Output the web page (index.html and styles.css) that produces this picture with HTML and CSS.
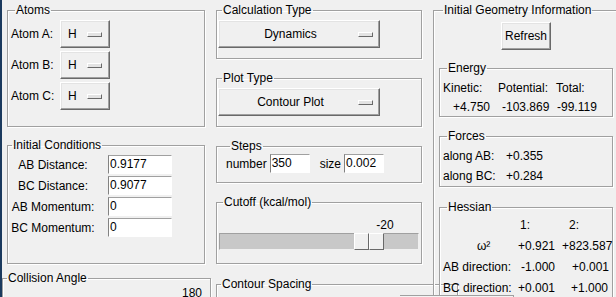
FILE: index.html
```html
<!DOCTYPE html>
<html>
<head>
<meta charset="utf-8">
<link rel="stylesheet" href="styles.css">
</head>
<body>
<div class="win">
  <div class="edge"></div>

  <div class="col col1">
    <fieldset class="grp atoms">
      <legend>Atoms</legend>
      <div class="arow"><span class="albl">Atom A:</span><div class="mbtn abtn"><span class="mtxt">H</span><i class="ind"></i></div></div>
      <div class="arow"><span class="albl">Atom B:</span><div class="mbtn abtn"><span class="mtxt">H</span><i class="ind"></i></div></div>
      <div class="arow"><span class="albl">Atom C:</span><div class="mbtn abtn"><span class="mtxt">H</span><i class="ind"></i></div></div>
    </fieldset>

    <fieldset class="grp init">
      <legend>Initial Conditions</legend>
      <div class="igrid">
        <span class="ilbl">AB Distance:</span><span class="entry">0.9177</span>
        <span class="ilbl">BC Distance:</span><span class="entry">0.9077</span>
        <span class="ilbl">AB Momentum:</span><span class="entry">0</span>
        <span class="ilbl">BC Momentum:</span><span class="entry">0</span>
      </div>
    </fieldset>

    <fieldset class="grp coll">
      <legend>Collision Angle</legend>
      <div class="cval">180</div>
      <div class="trough ctrough"></div>
    </fieldset>
  </div>

  <div class="col col2">
    <fieldset class="grp calc">
      <legend>Calculation Type</legend>
      <div class="mbtn wbtn"><span class="mtxt">Dynamics</span><i class="ind"></i></div>
    </fieldset>

    <fieldset class="grp plot">
      <legend>Plot Type</legend>
      <div class="mbtn wbtn"><span class="mtxt">Contour Plot</span><i class="ind"></i></div>
    </fieldset>

    <fieldset class="grp steps">
      <legend>Steps</legend>
      <div class="srow">
        <span class="slbl">number</span><span class="entry sent">350</span>
        <span class="slbl size">size</span><span class="entry sent">0.002</span>
      </div>
    </fieldset>

    <fieldset class="grp cutoff">
      <legend>Cutoff (kcal/mol)</legend>
      <div class="scale">
        <div class="sval" style="left: 75%">-20</div>
        <div class="trough">
          <div class="thumb" style="left: 75%"><i></i><i></i></div>
        </div>
      </div>
    </fieldset>

    <fieldset class="grp contour">
      <legend>Contour Spacing</legend>
      <div class="cspace"></div>
    </fieldset>
  </div>

  <div class="col col3">
    <fieldset class="grp geo">
      <legend>Initial Geometry Information</legend>
      <div class="inner">
        <div class="pbtn">Refresh</div>

        <fieldset class="grp sub energy">
          <legend>Energy</legend>
          <div class="egrid">
            <span class="h1">Kinetic:</span><span class="h2">Potential:</span><span class="h3">Total:</span>
            <span class="v1">+4.750</span><span class="v2">-103.869</span><span class="v3">-99.119</span>
          </div>
        </fieldset>

        <fieldset class="grp sub forces">
          <legend>Forces</legend>
          <div class="fgrid">
            <span>along AB:</span><span>+0.355</span>
            <span>along BC:</span><span>+0.284</span>
          </div>
        </fieldset>

        <fieldset class="grp sub hess">
          <legend>Hessian</legend>
          <div class="hgrid">
            <span></span><span class="p3">1:</span><span class="p8">2:</span>
            <span class="omega">ω²</span><span class="p1">+0.921</span><span class="p1">+823.587</span>
            <span>AB direction:</span><span class="p4">-1.000</span><span class="p11">+0.001</span>
            <span>BC direction:</span><span class="p1">+0.001</span><span class="p10">+1.000</span>
          </div>
        </fieldset>
      </div>
    </fieldset>
  </div>
</div>
<div class="popup"></div>
</body>
</html>
```

FILE: styles.css
```css
html, body {
  margin: 0;
  padding: 0;
}
body {
  width: 616px;
  height: 297px;
  overflow: hidden;
  position: relative;
  background: #f0f0f0;
  color: #000;
  font-family: "Liberation Sans", Arial, sans-serif;
  font-size: 12px;
  line-height: 14px;
}
.win {
  display: flex;
  align-items: flex-start;
  height: 297px;
}
.edge {
  flex: none;
  width: 2px;
  align-self: stretch;
  background: #1b3a5e;
}
.col {
  flex: none;
  display: flex;
  flex-direction: column;
  padding-top: 3px;
}
.col1 { margin-left: 5px; width: 198px; }
.col2 { margin-left: 11px; width: 206px; }
.col3 { margin-left: 11px; width: 190px; }

fieldset.grp {
  margin: 0;
  padding: 0;
  min-width: 0;
  border: 1px solid #a0a0a0;
  box-shadow: 1px 1px 0 #fff, inset 1px 1px 0 #fff;
}
legend {
  padding: 0 1px;
  margin-left: 4px;
  height: 14px;
  line-height: 14px;
}

/* menu buttons */
.mbtn {
  box-sizing: border-box;
  height: 28px;
  display: flex;
  align-items: center;
  background: #f0f0f0;
  border: 1px solid;
  border-color: #fff #696969 #696969 #fff;
  box-shadow: inset -1px -1px 0 #a0a0a0, inset 1px 1px 0 #e3e3e3;
}
.ind {
  flex: none;
  box-sizing: border-box;
  width: 15px;
  height: 5px;
  background: #e3e3e3;
  border: 1px solid;
  border-color: #fff #696969 #696969 #fff;
}
.abtn { width: 50px; padding: 0 7px 0 7px; }
.abtn .mtxt { flex: 1; }
.wbtn { width: 162px; padding-right: 6px; }
.wbtn .mtxt { flex: 1; text-align: center; padding-left: 4px; }

/* atoms */
.atoms {
  padding: 3px 0 16px 3px !important;
  display: flex;
  flex-direction: column;
  gap: 3px;
}
.arow {
  display: flex;
  align-items: center;
  height: 28px;
}
.albl { width: 49px; flex: none; }

/* entries */
.entry {
  box-sizing: border-box;
  display: block;
  height: 19px;
  line-height: 17px;
  background: #fff;
  border: 1px solid;
  border-color: #a0a0a0 #fff #fff #828282;
  padding-left: 1px;
}

/* initial conditions */
.init {
  margin-top: 11px !important;
  padding: 3px 0 26px 0 !important;
}
.igrid {
  display: grid;
  grid-template-columns: 100px 64px;
  grid-auto-rows: 19px;
  row-gap: 2px;
  align-items: center;
}
.ilbl {
  text-align: center;
  padding-right: 10px;
}

/* collision */
.coll {
  margin: 7px 0 0 -5px !important;
  width: 207px;
  padding: 1px 0 20px 0 !important;
}
.cval {
  text-align: right;
  padding-right: 8px;
  height: 14px;
}
.ctrough {
  margin: 0 8px 0 9px;
}

/* calc / plot */
.calc {
  padding: 3px 0 10px 1px !important;
}
.plot {
  margin-top: 12px !important;
  padding: 3px 0 10px 1px !important;
}

/* steps */
.steps {
  margin-top: 12px !important;
  padding: 1px 0 9px 9px !important;
}
.srow {
  display: flex;
  align-items: center;
  height: 19px;
}
.slbl { margin-right: 3px; }
.slbl.size { margin-left: 10px; }
.sent { width: 40px; }

/* cutoff */
.cutoff {
  margin-top: 12px !important;
  padding: 9px 0 13px 2px !important;
}
.scale {
  position: relative;
  width: 200px;
  padding-top: 15px;
}
.sval {
  position: absolute;
  top: 0;
  margin-left: 1px;
  width: 30px;
  text-align: center;
}
.trough {
  position: relative;
  box-sizing: border-box;
  height: 17px;
  background: #c8c8c8;
  border: 1px solid;
  border-color: #a0a0a0 #f0f0f0 #f0f0f0 #a0a0a0;
}
.thumb {
  position: absolute;
  top: -1px;
  margin-left: -15px;
  width: 30px;
  height: 17px;
  display: flex;
}
.thumb i {
  flex: 1;
  box-sizing: border-box;
  background: #f0f0f0;
  border: 1px solid;
  border-color: #fff #696969 #696969 #fff;
}

/* contour */
.contour {
  margin-top: 13px !important;
  width: 240px;
}
.cspace { height: 30px; }

/* geometry */
.geo {
  width: 200px;
  padding: 5px 0 10px 5px !important;
}
.inner {
  width: 174px;
  display: flex;
  flex-direction: column;
}
.pbtn {
  align-self: center;
  box-sizing: border-box;
  width: 50px;
  height: 28px;
  margin-left: 0;
  line-height: 26px;
  text-align: center;
  border: 1px solid;
  border-color: #fff #696969 #696969 #fff;
  box-shadow: inset -1px -1px 0 #a0a0a0, inset 1px 1px 0 #e3e3e3;
}
.sub { width: 174px; box-sizing: border-box; }
.energy {
  margin-top: 11px !important;
  padding: 3px 0 0 3px !important;
}
.egrid {
  display: grid;
  grid-template-columns: 55px 58px 1fr;
  grid-auto-rows: 19px;
  align-items: center;
}
.v1 { padding-left: 10px; }
.v2 { padding-left: 4px; }
.v3 { padding-left: 1px; }

.forces {
  margin-top: 12px !important;
  padding: 3px 0 0 3px !important;
}
.fgrid {
  display: grid;
  grid-template-columns: 63px 1fr;
  grid-auto-rows: 20px;
  align-items: center;
}
.hess {
  margin-top: 13px !important;
  padding: 0 0 10px 3px !important;
}
.hgrid {
  display: grid;
  grid-template-columns: 74px 44px 1fr;
  grid-auto-rows: 21px;
  align-items: center;
}
.omega { padding-left: 34px; }
.p1 { padding-left: 1px; }
.p3 { padding-left: 3px; }
.p4 { padding-left: 4px; }
.p8 { padding-left: 8px; }
.p10 { padding-left: 10px; }
.p11 { padding-left: 11px; }

.popup {
  position: absolute;
  left: 400px;
  top: 295px;
  width: 113px;
  height: 10px;
  border-top: 1px solid #a0a0a0;
  border-right: 1px solid #a0a0a0;
  background: #f4f4f4;
}
```
